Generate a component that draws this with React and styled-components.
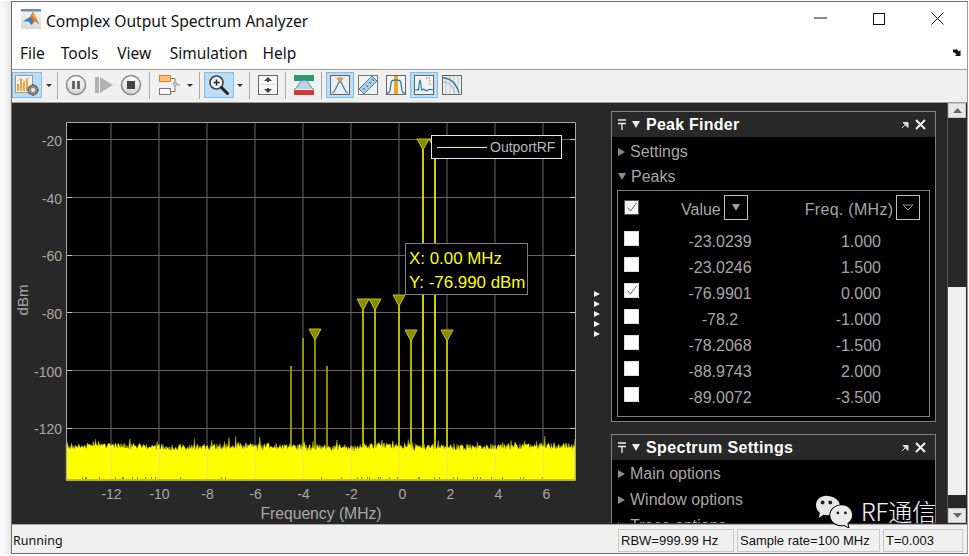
import React from "react";
import styled, { createGlobalStyle } from "styled-components";

const Global = createGlobalStyle`
  html, body { margin: 0; padding: 0; background: #fff; }
  body { font-family: "Liberation Sans", Arial, sans-serif; overflow: hidden; }
`;

const Page = styled.div`
  position: relative;
  width: 969px;
  height: 556px;
  display: flex;
  padding-top: 1px;
  box-sizing: border-box;
  overflow: hidden;
`;
const Shadow = styled.div`
  flex: 0 0 11px;
  height: 553px;
  background: linear-gradient(90deg, #fafafa, #f1f1f1 60%, #e2e2e2);
`;
const Win = styled.div`
  width: 957px;
  height: 553px;
  box-sizing: border-box;
  border: 1px solid #6e6e6e;
  border-right-color: #9a9a9a;
  display: flex;
  flex-direction: column;
  background: #fff;
`;
const TitleBar = styled.div`
  height: 31px;
  display: flex;
  align-items: center;
  padding: 1px 0 0 9px;
  flex: none;
`;
const TitleText = styled.div`
  font: 15.6px "Noto Sans", sans-serif;
  color: #111;
  margin-left: 5px;
  flex: 1;
  position: relative;
  top: 2px;
`;
const WinBtn = styled.div`
  width: 58.5px;
  height: 31px;
  display: flex;
  align-items: center;
  justify-content: center;
`;
const MenuBar = styled.div`
  height: 36px;
  display: flex;
  align-items: center;
  flex: none;
  padding: 2px 0 0 8px;
  box-sizing: border-box;
  position: relative;
  border-bottom: 1px solid #a0a0a0;
`;
const MenuItem = styled.span`
  font: 15.5px "Noto Sans", sans-serif;
  color: #111;
  margin-right: ${(p) => p.$gap}px;
`;
const Undock = styled.svg`
  position: absolute;
  right: 4px;
  top: 14px;
`;
const Toolbar = styled.div`
  height: 33px;
  flex: none;
  display: flex;
  align-items: flex-start;
  padding-top: 2px;
  box-sizing: border-box;
  background: #f0f0f0;
  border-bottom: 1px solid #a0a0a0;
`;
const ToolBtn = styled.div`
  width: ${(p) => p.$w}px;
  height: 26px;
  box-sizing: border-box;
  display: flex;
  align-items: center;
  justify-content: center;
  flex: none;
  background: ${(p) => (p.$on ? "#bcdcf4" : "transparent")};
  border: 1px solid ${(p) => (p.$on ? "#86bde8" : "transparent")};
`;
const Sep = styled.div`
  width: 1px;
  height: 27px;
  flex: none;
  background: #a8a8a8;
  margin: 0 ${(p) => p.$r}px 0 ${(p) => p.$l}px;
`;
const Caret = styled.div`
  width: 0;
  height: 0;
  border-left: 3px solid transparent;
  border-right: 3px solid transparent;
  border-top: 3px solid #333;
`;
const Main = styled.div`
  flex: 1;
  min-height: 0;
  display: flex;
  background: #282828;
  overflow: hidden;
`;
const PlotPane = styled.div`
  position: relative;
  flex: 0 0 579px;
  height: 420px;
`;
const PlotSvg = styled.svg`
  display: block;
`;
const Legend = styled.div`
  position: absolute;
  left: 419px;
  top: 32px;
  width: 131px;
  height: 24px;
  box-sizing: border-box;
  background: #000;
  border: 1px solid #e6e6e6;
  display: flex;
  align-items: center;
  padding-left: 5px;
  font-size: 14px;
  color: #b8b8b8;
`;
const LegendLine = styled.div`
  width: 50px;
  height: 1px;
  background: #ffff00;
  margin-right: 3px;
`;
const DataTip = styled.div`
  position: absolute;
  left: 393px;
  top: 140px;
  width: 123px;
  height: 52px;
  box-sizing: border-box;
  background: #000;
  border: 1px solid #808080;
  padding: 3px 0 0 3px;
  font-size: 16.9px;
  line-height: 24px;
  color: #ffff00;
  white-space: nowrap;
`;
const Sash = styled.div`
  flex: 0 0 20px;
  height: 420px;
  display: flex;
  flex-direction: column;
  align-items: flex-start;
  padding: 188px 0 0 3px;
  box-sizing: border-box;
  gap: 4px;
`;
const SashArrow = styled.div`
  width: 0;
  height: 0;
  border-top: 3px solid transparent;
  border-bottom: 3px solid transparent;
  border-left: 6px solid #f2f2f2;
`;
const Side = styled.div`
  flex: 0 0 325px;
  height: 420px;
  overflow: hidden;
  padding-top: 8px;
  box-sizing: border-box;
  display: flex;
  flex-direction: column;
  gap: 12px;
`;
const Panel = styled.div`
  flex: none;
  border: 1px solid #808080;
  background: #000;
  box-sizing: border-box;
`;
const PanelHead = styled.div`
  height: 25px;
  background: #282828;
  display: flex;
  align-items: center;
  padding: 0 9px 0 6px;
`;
const PanelTitle = styled.div`
  flex: 1;
  margin-left: ${(p) => p.$ml}px;
  font-size: 16px;
  font-weight: 700;
  color: #fff;
  letter-spacing: ${(p) => p.$ls}px;
  white-space: nowrap;
  padding-top: 1px;
`;
const IconGap = styled.span`
  width: ${(p) => p.$w}px;
  flex: none;
`;
const SectionList = styled.div`
  padding-top: ${(p) => p.$pt}px;
`;
const Section = styled.div`
  height: ${(p) => p.$h}px;
  display: flex;
  align-items: center;
  padding-left: 6px;
  font-size: 16px;
  color: #a6a6a6;
  white-space: nowrap;
`;
const TriRight = styled.span`
  width: 0;
  height: 0;
  border-top: 4px solid transparent;
  border-bottom: 4px solid transparent;
  border-left: 7px solid #8c8c8c;
  margin-right: 5px;
`;
const TriDown = styled.span`
  width: 0;
  height: 0;
  border-left: 4px solid transparent;
  border-right: 4px solid transparent;
  border-top: 7px solid ${(p) => p.$c || "#8c8c8c"};
  margin-right: ${(p) => p.$mr ?? 5}px;
`;
const TableBox = styled.div`
  margin: 1px 5px 4px;
  height: 227px;
  box-sizing: border-box;
  border: 1px solid #808080;
`;
const HeadRow = styled.div`
  height: 37px;
  display: flex;
  align-items: center;
  padding: 0 0 4px 6px;
  box-sizing: border-box;
  font-size: 16px;
  color: #a6a6a6;
`;
const Row = styled.div`
  height: 26px;
  display: flex;
  align-items: center;
  padding: 2px 0 0 6px;
  box-sizing: border-box;
  font-size: 16px;
  color: #a6a6a6;
`;
const Check = styled.div`
  width: 15px;
  height: 15px;
  flex: none;
  box-sizing: border-box;
  background: ${(p) => (p.$head ? "#f4f4f4" : "#fff")};
  border: 1px solid ${(p) => (p.$head ? "#555" : "#ddd")};
  display: flex;
  align-items: center;
  justify-content: center;
`;
const RowCheck = styled(Check)`
  align-self: flex-start;
  margin-top: 1px;
`;
const ValueCell = styled.div`
  width: 162px;
  text-align: center;
`;
const FreqCell = styled.div`
  width: 80px;
  text-align: right;
`;
const HeadLabel = styled.div`
  margin-left: ${(p) => p.$ml}px;
  padding-top: 4px;
  white-space: nowrap;
  letter-spacing: ${(p) => p.$ls || 0}px;
`;
const SortBtn = styled.div`
  width: 24px;
  height: 25px;
  box-sizing: border-box;
  margin-left: ${(p) => p.$ml}px;
  border: 1px solid #c0c0c0;
  display: flex;
  align-items: center;
  justify-content: center;
  flex: none;
`;
const HollowDown = styled.svg`
  display: block;
`;
const ScrollGap = styled.div`
  flex: 0 0 11px;
`;
const Scroll = styled.div`
  flex: 0 0 19px;
  height: 420px;
  display: flex;
  flex-direction: column;
  border-left: 1px solid #555;
  box-sizing: border-box;
`;
const ScrollBtn = styled.div`
  height: 15px;
  flex: none;
  background: #e8e8e8;
  border: 1px solid #c4c4c4;
  box-sizing: border-box;
  display: flex;
  align-items: center;
  justify-content: center;
`;
const ScrollTrack = styled.div`
  flex: ${(p) => p.$flex};
  ${(p) => (p.$h ? `height: ${p.$h}px;` : "")}
  background: ${(p) => (p.$thumb ? "#f0f0f0" : "#282828")};
`;
const StatusBar = styled.div`
  height: 29px;
  flex: none;
  box-sizing: border-box;
  background: #f0f0f0;
  border-top: 1px solid #a8a8a8;
  display: flex;
  align-items: center;
  padding-top: 2px;
  font-size: 13px;
  color: #111;
`;
const StatusText = styled.div`
  flex: 1;
  padding-left: 1px;
  font: 12.5px "Noto Sans", sans-serif;
`;
const StatusBox = styled.div`
  width: ${(p) => p.$w}px;
  height: 23px;
  box-sizing: border-box;
  border: 1px solid #c8c8c8;
  margin-right: ${(p) => p.$mr}px;
  padding: 0 0 0 2px;
  line-height: 21px;
  white-space: nowrap;
`;
const Watermark = styled.div`
  position: absolute;
  left: 816px;
  top: 495px;
  width: 122px;
  height: 36px;
  display: flex;
  align-items: flex-start;
`;
const WeChatSvg = styled.svg`
  flex: none;
`;
const WatermarkText = styled.div`
  margin-left: 7px;
  margin-top: 2px;
  font: 300 24px "Noto Sans CJK SC", "Noto Sans", sans-serif;
  line-height: 28px;
  color: #f0f0f0;
  white-space: nowrap;
  text-shadow: 0 0 1px #444;
`;

/* ---------- data ---------- */
const xOf = (f) => 399 + 24 * f;
const labelX = (f) => xOf(f) + (f >= 0 ? 3.5 : 0.5);
const yOf = (d) => 139.3 - (d + 20) * 2.885;
const xt = [-12, -10, -8, -6, -4, -2, 0, 2, 4, 6];
const yt = [-20, -40, -60, -80, -100, -120];
const stems = [
  { x: 291, top: 366, c: "#a4a400" },
  { x: 303, top: 338, c: "#a4a400" },
  { x: 315, top: 335, c: "#a4a400" },
  { x: 327, top: 366, c: "#a4a400" },
  { x: 363, top: 305, c: "#d2d200" },
  { x: 375, top: 305, c: "#d2d200" },
  { x: 399, top: 301, c: "#d2d200" },
  { x: 411, top: 336, c: "#d2d200" },
  { x: 423, top: 145, c: "#f4f400" },
  { x: 435, top: 145, c: "#f4f400" },
  { x: 447, top: 336, c: "#d2d200" },
];
const markers = [
  [315, 329],
  [363, 299],
  [375, 299],
  [399, 295],
  [411, 330],
  [423, 139],
  [435, 139],
  [447, 330],
];

let seed = 12345;
const rnd = () => {
  seed = (seed * 1664525 + 1013904223) % 4294967296;
  return seed / 4294967296;
};
const noisePts = (() => {
  const pts = ["66,480", "66,445"];
  for (let x = 67; x < 575; x += 0.75) {
    let y = 446.5 + (rnd() - 0.5) * 6 + Math.sin(x / 23) * 0.8;
    if (rnd() < 0.14) y -= rnd() * 4;
    if (rnd() < 0.02) y -= 3 + rnd() * 5;
    if (rnd() < 0.08) y += rnd() * 4;
    pts.push(`${x.toFixed(2)},${y.toFixed(1)}`);
  }
  pts.push("575,439", "575,480");
  return pts.join(" ");
})();
const specks = Array.from({ length: 40 }, () => Math.round(70 + rnd() * 500));

const peaks = [
  ["-23.0239", "1.000"],
  ["-23.0246", "1.500"],
  ["-76.9901", "0.000", true],
  ["-78.2", "-1.000"],
  ["-78.2068", "-1.500"],
  ["-88.9743", "2.000"],
  ["-89.0072", "-3.500"],
];

/* ---------- drawings ---------- */
const Logo = () => (
  <svg width="20" height="20" viewBox="0 0 20 20">
    <defs>
      <linearGradient id="lg" x1="0" x2="0" y1="0" y2="1">
        <stop offset="0" stopColor="#f4f4f4" />
        <stop offset="1" stopColor="#d8d8d8" />
      </linearGradient>
    </defs>
    <rect x="0" y="0" width="20" height="20" fill="url(#lg)" />
    <rect x="0" y="0" width="20" height="2.5" fill="#6f8fb0" />
    <path d="M2 12.5L7 9l2-1 3-5 6 12-4-3-3.5 4-3-3.5z" fill="#3f7cc0" />
    <path d="M9 8l3-5 6 12-4-3-3 3.5 1.5-5z" fill="#e8761e" />
    <path d="M11 6l2-2 2.5 7-2-1z" fill="#f2a92c" />
  </svg>
);
const Circ = ({ children }) => (
  <svg width="22" height="22" viewBox="0 0 22 22">
    <defs>
      <linearGradient id="cg" x1="0" x2="0" y1="0" y2="1">
        <stop offset="0" stopColor="#fdfdfd" />
        <stop offset="1" stopColor="#d4d4d4" />
      </linearGradient>
    </defs>
    <circle cx="11" cy="11" r="9.5" fill="url(#cg)" stroke="#8c8c8c" strokeWidth="1.6" />
    {children}
  </svg>
);
const ScopeIcon = () => (
  <svg width="26" height="24" viewBox="0 0 26 24">
    <rect x="1.5" y="2.5" width="17" height="17" fill="#f6f2e4" stroke="#9a9a9a" />
    <path d="M4 18V11M7 18V6M10 18V9M13 18V5" stroke="#e6a53c" strokeWidth="2" />
    <path d="M3 8l4-3 4 4 4-5" stroke="#c9c9c9" fill="none" />
    <circle cx="19" cy="17" r="5" fill="#8f8f8f" stroke="#5f5f5f" />
    <circle cx="19" cy="17" r="2" fill="#efefef" />
    <path d="M19 11v2M19 21v2M13 17h2M23 17h2M15 13l1.500 1.500M23 13l-1.500 1.500M15 21l1.500-1.500M23 21l-1.500-1.500" stroke="#6a6a6a" strokeWidth="1.500" />
  </svg>
);
const BlocksIcon = () => (
  <svg width="22" height="24" viewBox="0 0 22 24">
    <rect x="1.500" y="2.500" width="11" height="6" fill="#f6c27a" stroke="#d9822b" />
    <rect x="1.500" y="15.500" width="11" height="6" fill="#f8f8f8" stroke="#777" />
    <path d="M12.500 5.500H17v4M12.500 18.500H17v-4" fill="none" stroke="#777" />
    <path d="M15 10h4l-2 4z" fill="#f4f4f4" stroke="#777" strokeWidth=".8" />
    <path d="M19 12h3" stroke="#888" />
  </svg>
);
const ZoomIcon = () => (
  <svg width="22" height="22" viewBox="0 0 22 22">
    <circle cx="8.500" cy="8.500" r="6.500" fill="#eef5f8" stroke="#444" strokeWidth="1.600" />
    <path d="M5.500 8.500h6M8.500 5.500v6" stroke="#222" strokeWidth="1.500" />
    <path d="M13.500 13.500l6 6" stroke="#222" strokeWidth="3" strokeLinecap="round" />
  </svg>
);
const Framed = ({ children, bg = "#f7f7f7" }) => (
  <svg width="20" height="20" viewBox="0 0 20 20">
    <rect x=".5" y=".5" width="19" height="19" fill={bg} stroke="#666" />
    {children}
  </svg>
);
const Fit = () => (
  <Framed>
    <path d="M10 2l4 4h-3v1H9V6H6zM10 18l4-4h-3v-1H9v1H6z" fill="#444" />
    <path d="M3 9.500h14" stroke="#ddd" />
  </Framed>
);
const SpecColor = () => (
  <svg width="20" height="20" viewBox="0 0 20 20">
    <rect width="20" height="6" fill="#2d9a6a" />
    <rect y="6" width="20" height="9" fill="#eef2f4" />
    <rect y="15" width="20" height="5" fill="#d23a32" />
    <path d="M0 14c4 0 5-9 10-9s6 9 10 9" fill="#bcd3e4" stroke="#3f7fa8" />
  </svg>
);
const TriggerIcon = () => (
  <Framed bg="#e8eef2">
    <path d="M2 18c4-1 5-9 8-12 3 3 4 11 8 12" fill="none" stroke="#3f7fa8" strokeWidth="1.200" />
    <path d="M7 3h6l-3 5z" fill="#e2b04a" stroke="#9a7a2a" strokeWidth=".7" />
  </Framed>
);
const RulerIcon = () => (
  <svg width="20" height="20" viewBox="0 0 20 20">
    <rect x=".5" y=".5" width="19" height="19" fill="#f2f2f2" stroke="#777" />
    <path d="M1 14L14 1l5 5L6 19z" fill="#a9cde3" stroke="#55809c" />
    <path d="M5 13l2 2M8 10l2 2M11 7l2 2M14 4l2 2" stroke="#3f5f78" />
  </svg>
);
const ChannelIcon = () => (
  <Framed bg="#f4f4f4">
    <rect x="8" y="1" width="4" height="18" fill="#efa22a" />
    <path d="M1 18c3 0 3-1 4-10 1-3 2-3 5-3s4 0 5 3c1 9 1 10 4 10" fill="none" stroke="#2f7ba8" strokeWidth="1.300" />
  </Framed>
);
const PeakIcon = () => (
  <Framed bg="#f0f4f6">
    <path d="M1 15c2 0 2-1 3 0 1 1 1-10 2-10s1 11 2 10 2-1 3 0 2 1 3 0 2-1 5 0" fill="none" stroke="#2f7ba8" strokeWidth="1.200" />
    <path d="M12 3h5M15 6h2M15 9h2" stroke="#c8503a" strokeDasharray="1.500 1" />
  </Framed>
);
const CcdfIcon = () => (
  <Framed bg="#eceeef">
    <path d="M4 1v18M8 1v18M12 1v18M16 1v18" stroke="#c4c4c4" />
    <path d="M1 3c8 0 13 5 16 15" fill="none" stroke="#2f7ba8" strokeWidth="1.400" />
    <path d="M1 7c6 0 10 4 12 11" fill="none" stroke="#89b7d2" strokeWidth="1" />
  </Framed>
);
const Pin = () => (
  <svg width="8" height="11" viewBox="0 0 8 11">
    <path d="M0 1h8M0 4.500h8M4 4.500V11" stroke="#f0f0f0" strokeWidth="1.300" fill="none" />
  </svg>
);
const UndockSmall = () => (
  <svg width="8" height="8" viewBox="0 0 8 8">
    <path d="M1 7l4-4M2 1.500h5v5z" stroke="#ddd" strokeWidth="1" fill="#ddd" />
  </svg>
);
const CloseX = () => (
  <svg width="11" height="11" viewBox="0 0 11 11">
    <path d="M1 1l9 9M10 1l-9 9" stroke="#f0f0f0" strokeWidth="2" />
  </svg>
);
const Tick = () => (
  <svg width="12" height="11" viewBox="0 0 12 11">
    <path d="M1.500 5.500l3 3.500 6-8" fill="none" stroke="#666" strokeWidth="1" />
  </svg>
);
const Head = ({ title, ls, ml }) => (
  <PanelHead>
    <Pin />
    <IconGap $w={6} />
    <TriDown $c="#e8e8e8" $mr={0} />
    <PanelTitle $ls={ls} $ml={ml}>{title}</PanelTitle>
    <UndockSmall />
    <IconGap $w={6} />
    <CloseX />
  </PanelHead>
);
const WeChat = () => (
  <WeChatSvg width="38" height="33" viewBox="0 0 40 33">
    <path d="M11 0C5 0 0 4 0 10c0 3.500 2 6 4 8l-1 5 5-3c2 .6 6 .6 8 0 6-2 9-5 9-10C25 4 17 0 11 0z" fill="#e6e6e6" />
    <circle cx="7" cy="7" r="2" fill="#222" />
    <circle cx="15" cy="7" r="2" fill="#222" />
    <path d="M27 10c-6.500 0-12 4.500-12 10.500S20.500 31 27 31c1.500 0 2 0 3-.3l4 2.300-1-4c3-2 5-5 5-8.500C38 14.500 33.500 10 27 10z" fill="#000" stroke="#000" strokeWidth="2" />
    <path d="M27 10c-6.500 0-12 4.500-12 10.500S20.500 31 27 31c1.500 0 2 0 3-.3l4 2.300-1-4c3-2 5-5 5-8.500C38 14.500 33.500 10 27 10z" fill="#ececec" />
    <circle cx="23" cy="18" r="1.500" fill="#222" />
    <circle cx="31" cy="18" r="1.500" fill="#222" />
  </WeChatSvg>
);

const Plot = () => (
  <PlotSvg width="579" height="420" viewBox="12 103 579 420">
    <rect x="66.500" y="122.500" width="508.500" height="357.500" fill="#000" />
    {xt.map((t) => (
      <line key={t} x1={xOf(t)} x2={xOf(t)} y1="123" y2="480" stroke="#666" />
    ))}
    {yt.map((t) => (
      <line key={t} x1="67" x2="575" y1={Math.round(yOf(t)) + 0.5} y2={Math.round(yOf(t)) + 0.5} stroke="#666" />
    ))}
    {stems.map((s) => (
      <line key={s.x} x1={s.x} x2={s.x} y1={s.top} y2="450" stroke={s.c} strokeWidth="1.700" />
    ))}
    <polygon points={noisePts} fill="#ffff00" stroke="#a8a800" strokeWidth=".5" />
    {specks.map((x, i) => (
      <line key={i} x1={x + 0.5} x2={x + 0.5} y1={477} y2="479" stroke="#8c8c00" />
    ))}
    {xt.map((t) => (
      <line key={t} x1={xOf(t)} x2={xOf(t)} y1="446" y2="479" stroke="#e2e27a" />
    ))}
    <path d="M66.500 122.500H575.500V480.500H66.500Z" fill="none" stroke="#a8a8a8" />
    <line x1="66" x2="575" y1="480" y2="480" stroke="#b8b800" strokeWidth="1.500" />
    {yt.map((t) => (
      <path key={t} d={`M67 ${Math.round(yOf(t)) + 0.5}h5M570 ${Math.round(yOf(t)) + 0.5}h5`} stroke="#c4c4c4" />
    ))}
    {markers.map(([x, y]) => (
      <path key={x} d={`M${x - 6} ${y}h12l-6 11z`} fill="#8a8a00" stroke="#c4c400" strokeWidth="1" />
    ))}
    <g fontFamily="Liberation Sans, Arial, sans-serif" fontSize="14" fill="#a8a8a8">
      {yt.map((t) => (
        <text key={t} x="62" y={yOf(t) + 6.500} textAnchor="end">
          {t}
        </text>
      ))}
      {xt.map((t) => (
        <text key={t} x={labelX(t)} y="499" textAnchor="middle">
          {t}
        </text>
      ))}
      <text x="321" y="519" fontSize="15.7" textAnchor="middle">
        Frequency (MHz)
      </text>
      <text x="0" y="0" fontSize="15" textAnchor="middle" transform="translate(28 300) rotate(-90)">
        dBm
      </text>
    </g>
  </PlotSvg>
);

const PeakPanel = () => (
  <Panel>
    <Head title="Peak Finder" ls={0.25} ml={6} />
    <SectionList $pt={2}>
      <Section $h={25}>
        <TriRight />
        Settings
      </Section>
      <Section $h={25}>
        <TriDown />
        Peaks
      </Section>
    </SectionList>
    <TableBox>
      <HeadRow>
        <Check $head>
          <Tick />
        </Check>
        <HeadLabel $ml={42}>Value</HeadLabel>
        <SortBtn $ml={3}>
          <TriDown $c="#a0a0a0" $mr={0} />
        </SortBtn>
        <HeadLabel $ml={57} $ls={0.3}>Freq. (MHz)</HeadLabel>
        <SortBtn $ml={3}>
          <HollowDown width="12" height="7" viewBox="0 0 12 7">
            <path d="M1 1h10L6 6z" fill="none" stroke="#909090" />
          </HollowDown>
        </SortBtn>
      </HeadRow>
      {peaks.map(([v, f, c]) => (
        <Row key={v}>
          <RowCheck>{c && <Tick />}</RowCheck>
          <ValueCell>{v}</ValueCell>
          <FreqCell>{f}</FreqCell>
        </Row>
      ))}
    </TableBox>
  </Panel>
);

export default function App() {
  return (
    <>
      <Global />
      <Page>
        <Shadow />
        <Win>
          <TitleBar>
            <Logo />
            <TitleText>Complex Output Spectrum Analyzer</TitleText>
            <WinBtn>
              <svg width="13" height="3" viewBox="0 0 13 3"><path d="M0 1h13" stroke="#111" /></svg>
            </WinBtn>
            <WinBtn>
              <svg width="12" height="12" viewBox="0 0 12 12"><rect x=".5" y=".5" width="11" height="11" fill="none" stroke="#111" /></svg>
            </WinBtn>
            <WinBtn>
              <svg width="13" height="13" viewBox="0 0 13 13"><path d="M.5.5l12 12M12.500.5l-12 12" stroke="#111" /></svg>
            </WinBtn>
          </TitleBar>
          <MenuBar>
            <MenuItem $gap={16}>File</MenuItem>
            <MenuItem $gap={18.8}>Tools</MenuItem>
            <MenuItem $gap={18.5}>View</MenuItem>
            <MenuItem $gap={15}>Simulation</MenuItem>
            <MenuItem $gap={0}>Help</MenuItem>
            <Undock width="10" height="8" viewBox="0 0 10 8">
              <path d="M0 1.500h4l2 2 1.500-1.500V8H2l1.500-1.500-2-2H0z" fill="#111" />
            </Undock>
          </MenuBar>
          <Toolbar>
            <ToolBtn $w={30} $on><ScopeIcon /></ToolBtn>
            <ToolBtn $w={14}><Caret /></ToolBtn>
            <Sep $l={1} $r={5} />
            <ToolBtn $w={26}>
              <Circ><path d="M8.500 7v8M13.500 7v8" stroke="#555" strokeWidth="2.600" /></Circ>
            </ToolBtn>
            <ToolBtn $w={30}>
              <svg width="18" height="16" viewBox="0 0 18 16">
                <rect x="0" y="0" width="4" height="16" fill="#b2b2b2" />
                <path d="M5 0l13 8L5 16z" fill="#b2b2b2" />
              </svg>
            </ToolBtn>
            <ToolBtn $w={24}>
              <Circ><rect x="7" y="7" width="8" height="8" fill="#444" /></Circ>
            </ToolBtn>
            <Sep $l={6} $r={5} />
            <ToolBtn $w={28}><BlocksIcon /></ToolBtn>
            <ToolBtn $w={14}><Caret /></ToolBtn>
            <Sep $l={2} $r={4} />
            <ToolBtn $w={30} $on><ZoomIcon /></ToolBtn>
            <ToolBtn $w={12}><Caret /></ToolBtn>
            <Sep $l={3} $r={4} />
            <ToolBtn $w={28}><Fit /></ToolBtn>
            <Sep $l={3} $r={4} />
            <ToolBtn $w={28}><SpecColor /></ToolBtn>
            <Sep $l={3} $r={4} />
            <ToolBtn $w={28} $on><TriggerIcon /></ToolBtn>
            <ToolBtn $w={28}><RulerIcon /></ToolBtn>
            <ToolBtn $w={28}><ChannelIcon /></ToolBtn>
            <ToolBtn $w={28} $on><PeakIcon /></ToolBtn>
            <ToolBtn $w={28}><CcdfIcon /></ToolBtn>
          </Toolbar>
          <Main>
            <PlotPane>
              <Plot />
              <Legend>
                <LegendLine />
                OutportRF
              </Legend>
              <DataTip>
                X: 0.00 MHz
                <br />
                Y: -76.990 dBm
              </DataTip>
            </PlotPane>
            <Sash>
              {[0, 1, 2, 3, 4].map((i) => (
                <SashArrow key={i} />
              ))}
            </Sash>
            <Side>
              <PeakPanel />
              <Panel>
                <Head title="Spectrum Settings" ls={0.35} ml={6} />
                <SectionList $pt={1}>
                  <Section $h={26}>
                    <TriRight />
                    Main options
                  </Section>
                  <Section $h={26}>
                    <TriRight />
                    Window options
                  </Section>
                  <Section $h={26}>
                    <TriRight />
                    Trace options
                  </Section>
                </SectionList>
              </Panel>
            </Side>
            <ScrollGap />
            <Scroll>
              <ScrollBtn>
                <svg width="9" height="5" viewBox="0 0 9 5"><path d="M0 5h9L4.500 0z" fill="#666" /></svg>
              </ScrollBtn>
              <ScrollTrack $h={169} />
              <ScrollTrack $thumb $h={208} />
              <ScrollTrack $flex={1} />
              <ScrollBtn>
                <svg width="9" height="5" viewBox="0 0 9 5"><path d="M0 0h9L4.500 5z" fill="#666" /></svg>
              </ScrollBtn>
            </Scroll>
          </Main>
          <StatusBar>
            <StatusText>Running</StatusText>
            <StatusBox $w={116} $mr={3}>RBW=999.99 Hz</StatusBox>
            <StatusBox $w={143} $mr={3}>Sample rate=100 MHz</StatusBox>
            <StatusBox $w={80} $mr={4}>T=0.003</StatusBox>
          </StatusBar>
        </Win>
        <Watermark>
          <WeChat />
          <WatermarkText>RF通信</WatermarkText>
        </Watermark>
      </Page>
    </>
  );
}
